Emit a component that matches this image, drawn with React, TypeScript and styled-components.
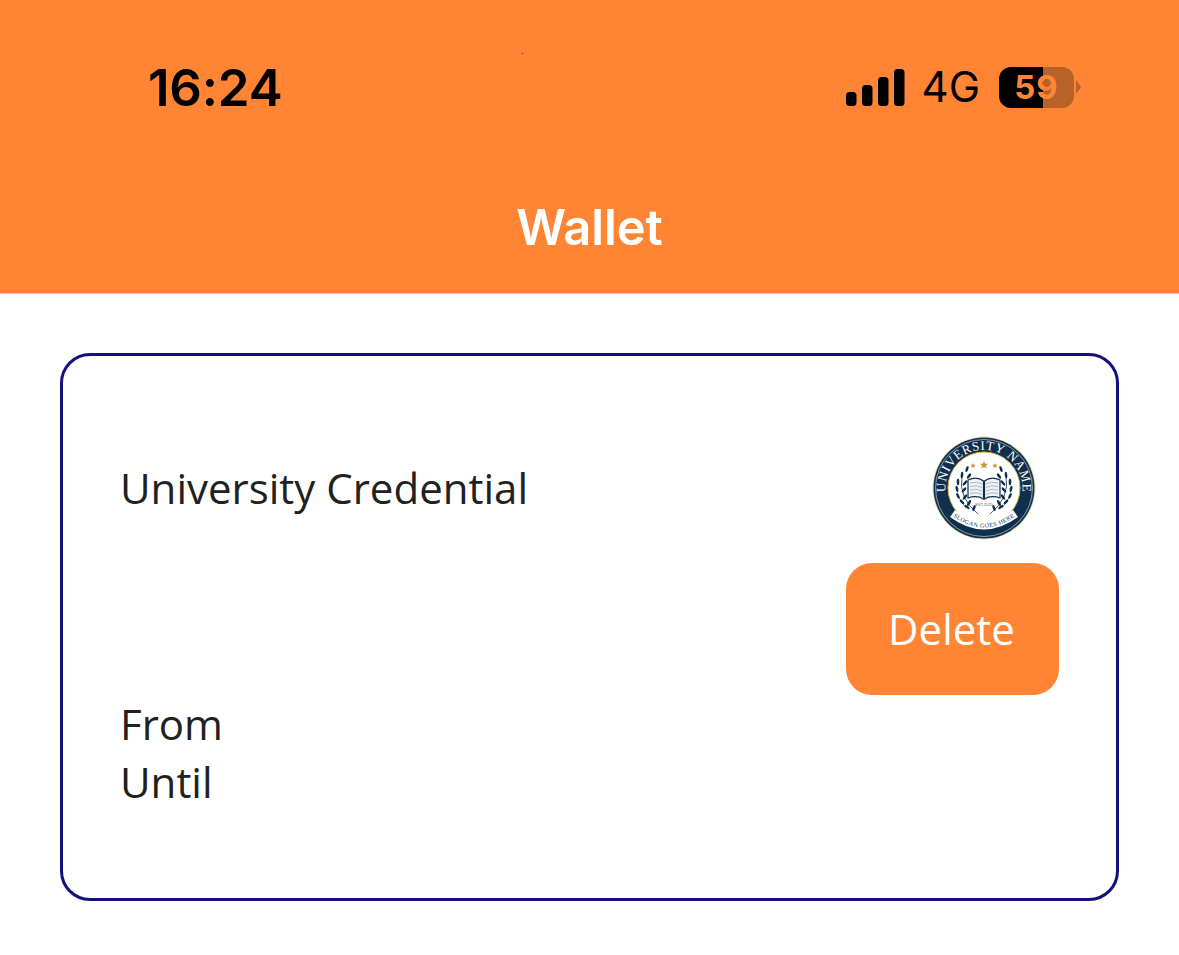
import React from "react";
import styled, { createGlobalStyle } from "styled-components";

const Global = createGlobalStyle`
  html, body { margin: 0; padding: 0; background: #fff; }
  body { width: 1179px; height: 955px; overflow: hidden; font-family: "Open Sans", sans-serif; }
`;

const Page = styled.div`
  width: 1179px;
  height: 955px;
  display: flex;
  flex-direction: column;
  background: #fff;
`;

const Header = styled.header`
  height: 293px;
  box-sizing: content-box;
  background: #ff8534;
  border-bottom: 1px solid #c9c9c9;
  display: flex;
  flex-direction: column;
  position: relative;
`;

const Speck = styled.i`
  position: absolute;
  left: 522px;
  top: 53px;
  width: 1px;
  height: 1px;
  background: #333;
`;

const StatusBar = styled.div`
  height: 177px;
  box-sizing: border-box;
  padding: 58px 98px 0 148px;
  display: flex;
  justify-content: space-between;
  align-items: flex-start;
`;

const Clock = styled.span`
  font-family: Inter, sans-serif;
  font-weight: 600;
  font-size: 51px;
  letter-spacing: -0.2px;
  line-height: 60px;
  color: #000;
`;

const StatusIcons = styled.div`
  display: flex;
  align-items: center;
  height: 60px;
  margin-top: -1px;
`;

const Network = styled.span`
  font-family: Inter, sans-serif;
  font-weight: 400;
  font-size: 42px;
  line-height: 60px;
  color: #000;
  margin: 0 19px 0 17px;
`;

const Battery = styled.div`
  width: 75px;
  height: 41px;
  border-radius: 12px;
  overflow: hidden;
  background: linear-gradient(to right, #000 0 44px, #b66228 44px 100%);
  display: flex;
  align-items: center;
  justify-content: center;
  font-family: Inter, sans-serif;
  font-weight: 700;
  font-size: 33px;
  letter-spacing: 1px;
  color: #ff8534;
`;

const BatteryTip = styled.span`
  width: 0;
  height: 0;
  margin: 0 0 0 2px;
  border-left: 5px solid #b66228;
  border-top: 7px solid transparent;
  border-bottom: 7px solid transparent;
`;

const Title = styled.h1`
  margin: 0;
  text-align: center;
  font-family: Inter, sans-serif;
  font-weight: 600;
  font-size: 48.800px;
  line-height: 60px;
  color: #fff;
  padding-top: 21px;
`;

const Content = styled.main`
  padding: 59px 60px 0 60px;
`;

const Card = styled.section`
  height: 548px;
  box-sizing: border-box;
  border: 3px solid #14107e;
  border-radius: 30px;
  padding: 80px 57px 0 57px;
  display: flex;
  justify-content: space-between;
`;

const LeftColumn = styled.div`
  display: flex;
  flex-direction: column;
  justify-content: space-between;
  height: 375px;
  padding-top: 22px;
  box-sizing: border-box;
`;

const Label = styled.div`
  font-size: 42px;
  line-height: 59px;
  color: #212121;
`;

const Dates = styled.div`
  display: flex;
  flex-direction: column;
  height: 117px;

  & > * + * {
    margin-top: -1px;
  }
`;

const RightColumn = styled.div`
  display: flex;
  flex-direction: column;
  align-items: flex-end;
  gap: 23px;
`;

const SealFrame = styled.div`
  width: 104px;
  height: 104px;
  margin-right: 23px;
`;

const DeleteButton = styled.button`
  width: 213px;
  height: 132px;
  border: 0;
  border-radius: 26px;
  background: #ff8534;
  color: #fff;
  font-family: "Open Sans", sans-serif;
  font-size: 42px;
  padding: 0 2px 2px 0;
`;

const leaves = [
  [35, 33, 20], [30, 39, 5], [37, 40, 35], [26, 46, 0], [33, 47, 40], [25, 53, -10],
  [32, 54, 40], [26, 60, -25], [33, 61, 35], [30, 66, -40], [37, 67, 30], [35, 71, -55], [42, 72, 20],
];

const Wreath = () => (
  <g fill="#0f2f4d">
    {leaves.map(([x, y, r]) => (
      <ellipse key={`${x}-${y}`} cx={x} cy={y} rx="1.300" ry="3.200" transform={`rotate(${r} ${x} ${y})`} />
    ))}
    <path d="M30 40 Q26 62 46 78" fill="none" stroke="#0f2f4d" strokeWidth=".8" />
  </g>
);

const Seal = () => (
  <svg width="104" height="104" viewBox="0 0 104 104" aria-hidden="true">
    <defs>
      <path id="arcTop" d="M 15 63 A 38.500 38.500 0 1 1 89 63" />
      <path id="arcBottom" d="M 18 78 Q 52 105 86 78" />
    </defs>
    <circle cx="52" cy="52" r="51.500" fill="#efe3b8" />
    <circle cx="52" cy="52" r="50.500" fill="#0f2f4d" />
    <circle cx="52" cy="52" r="48.500" fill="none" stroke="#dfe6ea" strokeWidth=".6" />
    <circle cx="52" cy="52" r="36" fill="#fff" stroke="#d9b45c" strokeWidth="1" />
    <text fontFamily="Liberation Serif, serif" fontSize="13" fill="#fff" letterSpacing=".6">
      <textPath href="#arcTop" startOffset="50%" textAnchor="middle">UNIVERSITY NAME</textPath>
    </text>
    <path d="M18 81 Q52 106 86 81 L81 74 Q52 96 23 74Z" fill="#fff" />
    <text fontFamily="Liberation Serif, serif" fontSize="6" fill="#0f2f4d" letterSpacing=".5">
      <textPath href="#arcBottom" startOffset="50%" textAnchor="middle">SLOGAN GOES HERE</textPath>
    </text>
    <g fill="#c8912c">
      <path d="M52 25l1.200 2.800h3l-2.400 1.800.9 3-2.700-1.800-2.700 1.800.9-3-2.400-1.800h3z" />
      <path d="M41 27l.8 1.800h2l-1.600 1.200.6 2-1.800-1.200-1.800 1.200.6-2-1.600-1.200h2z" />
      <path d="M63 27l.8 1.800h2l-1.600 1.200.6 2-1.800-1.200-1.800 1.200.6-2-1.600-1.200h2z" />
    </g>
    <path d="M36 44 Q45 40 51.500 45 V63 Q45 59 36 62Z" fill="#eef2f5" stroke="#0f2f4d" strokeWidth="1.200" />
    <path d="M68 44 Q59 40 52.500 45 V63 Q59 59 68 62Z" fill="#eef2f5" stroke="#0f2f4d" strokeWidth="1.200" />
    <g stroke="#8fa1b3" strokeWidth=".7" fill="none">
      <path d="M38 47 Q45 45 50 48M38 50.500 Q45 48.500 50 51.500M38 54 Q45 52 50 55M38 57.500 Q45 55.500 50 58.500" />
      <path d="M66 47 Q59 45 54 48M66 50.500 Q59 48.500 54 51.500M66 54 Q59 52 54 55M66 57.500 Q59 55.500 54 58.500" />
    </g>
    <Wreath />
    <g transform="matrix(-1 0 0 1 104 0)">
      <Wreath />
    </g>
    <text x="52" y="70" textAnchor="middle" fontFamily="Liberation Sans, sans-serif" fontSize="4" fill="#566">EST.2020</text>
  </svg>
);

const Signal = () => (
  <svg width="58.500" height="37" viewBox="0 0 58.500 37" aria-hidden="true">
    <rect x="0" y="23" width="10.500" height="14" rx="3.500" />
    <rect x="16" y="16" width="10.500" height="21" rx="3.500" />
    <rect x="32" y="8" width="10.500" height="29" rx="3.500" />
    <rect x="48" y="0" width="10.500" height="37" rx="3.500" />
  </svg>
);

export default function App() {
  return (
    <Page>
      <Global />
      <Header>
        <Speck />
        <StatusBar>
          <Clock>16:24</Clock>
          <StatusIcons>
            <Signal />
            <Network>4G</Network>
            <Battery>59</Battery>
            <BatteryTip />
          </StatusIcons>
        </StatusBar>
        <Title>Wallet</Title>
      </Header>
      <Content>
        <Card>
          <LeftColumn>
            <Label>University Credential</Label>
            <Dates>
              <Label>From</Label>
              <Label>Until</Label>
            </Dates>
          </LeftColumn>
          <RightColumn>
            <SealFrame>
              <Seal />
            </SealFrame>
            <DeleteButton>Delete</DeleteButton>
          </RightColumn>
        </Card>
      </Content>
    </Page>
  );
}
